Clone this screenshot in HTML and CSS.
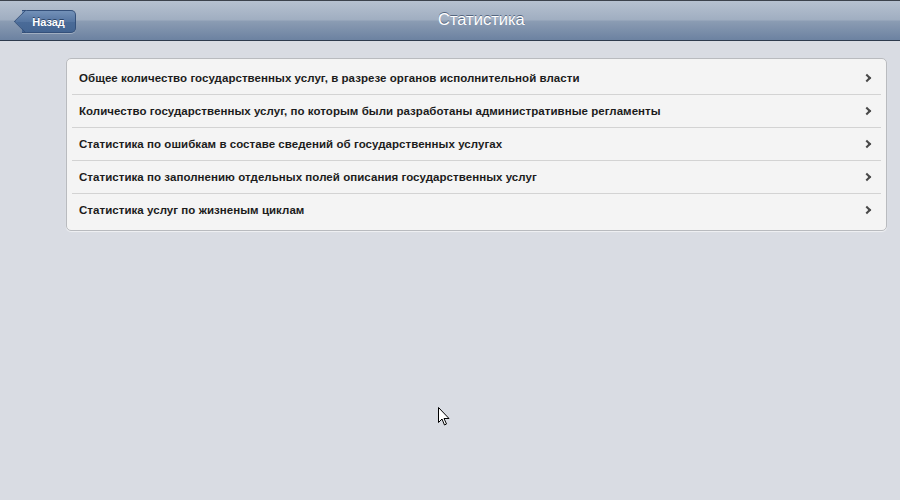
FILE: index.html
```html
<!DOCTYPE html>
<html>
<head>
  <link rel="stylesheet" href="styles.css">
</head>
<body>
  <div class="toolbar">
    <a class="back-btn" href="#">Назад</a>
    <div class="toolbar-title">Статистика</div>
  </div>

  <div class="content">
    <ul class="menu-list">
      <li class="menu-item">Общее количество государственных услуг, в разрезе органов исполнительной власти</li>
      <li class="menu-item">Количество государственных услуг, по которым были разработаны административные регламенты</li>
      <li class="menu-item">Статистика по ошибкам в составе сведений об государственных услугах</li>
      <li class="menu-item">Статистика по заполнению отдельных полей описания государственных услуг</li>
      <li class="menu-item">Статистика услуг по жизненым циклам</li>
    </ul>
  </div>

  <svg class="cursor" width="12" height="19" viewBox="0 0 12 19">
    <path d="M0.5 0.5 L0.5 15.5 L4 12 L6.5 18 L8.5 17 L6 11.5 L11 11.5 Z" fill="#fff" stroke="#000" stroke-width="1"/>
  </svg>
</body>
</html>
```

FILE: styles.css
```css
body {
  margin: 0;
  width: 900px;
  height: 500px;
  background: #d9dce3;
  font-family: "Liberation Sans", Arial, sans-serif;
  overflow: hidden;
  position: relative;
}

.toolbar {
  height: 41px;
  box-sizing: border-box;
  border-top: 1px solid #3c424c;
  border-bottom: 1px solid #2e3b4e;
  background: linear-gradient(#b6c1d0 0%, #a0aec1 48%, #8b9cb3 52%, #6c82a1 100%);
  display: flex;
  align-items: center;
  position: relative;
}

.back-btn {
  position: relative;
  margin-left: 22px;
  margin-top: 2px;
  width: 54px;
  height: 23px;
  box-sizing: border-box;
  display: flex;
  align-items: center;
  justify-content: center;
  color: #fff;
  font-size: 11px;
  font-weight: bold;
  text-decoration: none;
  text-shadow: 0 -1px 0 #2c4364;
  background: linear-gradient(#7391b8 0%, #5676a2 50%, #4a6b98 51%, #446592 100%);
  border: 1px solid #34507a;
  border-left: none;
  border-radius: 0 5px 5px 0;
  box-shadow: 0 1px 0 rgba(255, 255, 255, 0.3);
  z-index: 1;
}

.back-btn::before {
  content: "";
  position: absolute;
  left: -5px;
  top: 2px;
  width: 16px;
  height: 16px;
  transform: rotate(45deg);
  background: linear-gradient(135deg, #7391b8 0%, #5676a2 50%, #4a6b98 51%, #446592 100%);
  border-left: 1px solid #34507a;
  border-bottom: 1px solid #34507a;
  border-radius: 0 0 0 2px;
  z-index: -1;
}

.toolbar-title {
  position: absolute;
  left: 438px;
  top: 9px;
  color: #fff;
  font-size: 16.5px;
  text-shadow: 0 -1px 0 #55667f;
}

.content {
  padding: 17px 13px 0 66px;
}

.menu-list {
  list-style: none;
  margin: 0;
  padding: 3px 5px 4px;
  background: #f4f4f4;
  border: 1px solid #b9bbbf;
  border-radius: 5px;
  box-shadow: 0 1px 1px rgba(255, 255, 255, 0.6);
}

.menu-item {
  position: relative;
  height: 32px;
  line-height: 33px;
  padding-left: 7px;
  font-size: 11.5px;
  letter-spacing: 0.05px;
  font-weight: bold;
  color: #1c1c1c;
  border-bottom: 1px solid #d3d3d3;
}

.menu-item:last-child {
  border-bottom: none;
}

.menu-item::after {
  content: "";
  position: absolute;
  right: 11px;
  top: 13px;
  width: 4px;
  height: 4px;
  border-top: 2px solid #484848;
  border-right: 2px solid #484848;
  transform: rotate(45deg);
}

.cursor {
  position: absolute;
  left: 438px;
  top: 407px;
}
```
